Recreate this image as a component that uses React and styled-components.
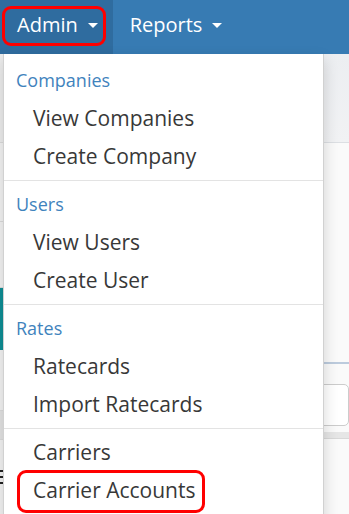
import styled, { createGlobalStyle } from "styled-components";

const GlobalStyle = createGlobalStyle`
    html, body {
        margin: 0;
        padding: 0;
        background: #fff;
    }
    body {
        font-family: "Open Sans", "Liberation Sans", sans-serif;
    }
`

const Page = styled.div`
    position: relative;
    width: 349px;
    height: 514px;
    overflow: hidden;
    background: #fff;
`

const Navbar = styled.nav`
    display: flex;
    height: 54px;
    background: #377bb3;
`

const NavItem = styled.div`
    position: relative;
    display: flex;
    align-items: center;
    gap: 10px;
    padding: 0 15px 5px 17px;
    font-size: 20px;
    color: #fff;
    background: ${(props) => props.active ? "#2f6c9f" : "transparent"};
`

const Caret = styled.span`
    display: inline-block;
    width: 0;
    height: 0;
    margin-top: 2px;
    border-top: 5px solid #fff;
    border-left: 5px solid transparent;
    border-right: 5px solid transparent;
`

const Annotation = styled.span`
    position: absolute;
    top: ${(props) => props.top}px;
    bottom: ${(props) => props.bottom}px;
    left: ${(props) => props.left}px;
    right: ${(props) => props.right}px;
    border: 3px solid #f00;
    border-radius: 9px;
    pointer-events: none;
`

const Body = styled.div`
    display: flex;
    height: 460px;
`

const Sidebar = styled.aside`
    display: flex;
    flex-direction: column;
    width: 200px;
    background: #f4f4f4;
    border-right: 1px solid #ddd;
`

const SideBlock = styled.div`
    height: ${(props) => props.h}px;
    background: ${(props) => props.bg || "#f4f4f4"};
    border-bottom: 1px solid ${(props) => props.line || "#dcdcdc"};
`

const MenuGlyph = styled.div`
    margin-top: 30px;
    width: 6px;
    display: flex;
    flex-direction: column;
    gap: 4px;

    & span {
        height: 2px;
        background: #222;
    }
`

const Main = styled.main`
    flex: 1;
    display: flex;
    flex-direction: column;
`

const SubHeader = styled.div`
    height: 88px;
    background: linear-gradient(#eceef1, #f1f2f4);
    border-bottom: 1px solid #dcdfe3;
`

const Content = styled.div`
    flex: 1;
    display: flex;
    flex-direction: column;
    padding-left: 11px;
    background: #fafafa;
`

const TabLine = styled.div`
    margin-top: 219px;
    height: 2px;
    background: #bccbdd;
`

const InputBox = styled.div`
    margin: 20px 0 0 5px;
    height: 40px;
    border: 1px solid #ccc;
    border-radius: 5px;
    background: #fff;
`

const Band = styled.div`
    margin: 6px 0 0 -11px;
    height: 6px;
    background: #e6e6e6;
    border-bottom: 1px solid #d8d8d8;
`

const Dropdown = styled.ul`
    position: absolute;
    top: 54px;
    left: 3px;
    width: 321px;
    height: 480px;
    margin: 0;
    padding: 7px 0 0;
    list-style: none;
    background: #fff;
    border: 1px solid rgba(0, 0, 0, 0.18);
    border-top: none;
    box-shadow: 0 6px 14px rgba(0, 0, 0, 0.16);
    box-sizing: border-box;
`

const Header = styled.li`
    height: 38px;
    line-height: 38px;
    padding-left: 12px;
    font-size: 18px;
    color: #3f83bd;
`

const Item = styled.li`
    position: relative;
    height: 38px;
    line-height: 38px;
    padding-left: 29px;
    font-size: 21px;
    color: #383838;
`

const Divider = styled.li`
    height: 1px;
    margin: 5px 0 4px;
    background: #e3e3e3;
`

const sections = [
    { title: "Companies", items: ["View Companies", "Create Company"] },
    { title: "Users", items: ["View Users", "Create User"] },
    { title: "Rates", items: ["Ratecards", "Import Ratecards"] },
    { title: null, items: ["Carriers", "Carrier Accounts"] },
];

function App() {
    return (
        <Page>
            <GlobalStyle />
            <Navbar>
                <NavItem active>
                    Admin <Caret />
                    <Annotation top={6} bottom={8} left={2} right={7} />
                </NavItem>
                <NavItem>
                    Reports <Caret />
                </NavItem>
            </Navbar>
            <Body>
                <Sidebar>
                    <SideBlock h={88} bg="#ededed" />
                    <SideBlock h={78} />
                    <SideBlock h={65} />
                    <SideBlock h={61} bg="#0e8f96" line="#0e8f96" />
                    <SideBlock h={60} bg="#f4f4f4" />
                    <SideBlock h={28} bg="#e4e4e4" />
                    <MenuGlyph>
                        <span />
                        <span />
                        <span />
                    </MenuGlyph>
                </Sidebar>
                <Main>
                    <SubHeader />
                    <Content>
                        <TabLine />
                        <InputBox />
                        <Band />
                    </Content>
                </Main>
            </Body>
            <Dropdown>
                {sections.map((section, i) => (
                    <>
                        {i > 0 && <Divider key={"d" + i} />}
                        {section.title && <Header key={"h" + i}>{section.title}</Header>}
                        {section.items.map((item) => (
                            <Item key={item}>
                                {item}
                                {item === "Carrier Accounts" && (
                                    <Annotation top={-1} bottom={-4} left={13} right={118} />
                                )}
                            </Item>
                        ))}
                    </>
                ))}
            </Dropdown>
        </Page>
    );
}

export default App
